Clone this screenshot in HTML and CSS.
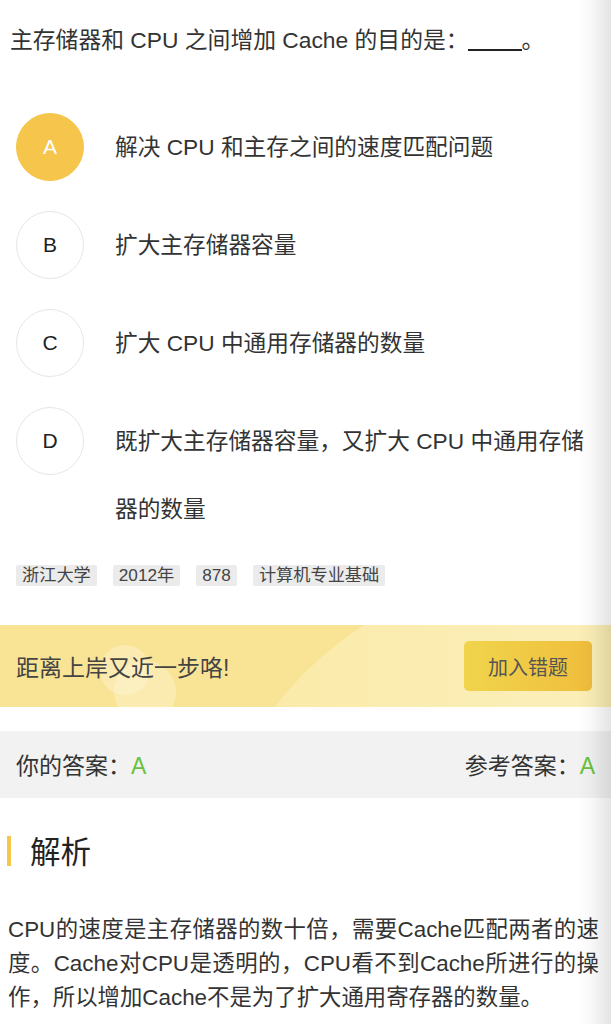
FILE: index.html
```html
<!DOCTYPE html>
<html lang="zh-CN">
<head>
<meta charset="utf-8">
<title>题目解析</title>
<link rel="stylesheet" href="styles.css">
</head>
<body>
<div class="page">
  <div class="question">主存储器和 CPU 之间增加 Cache 的目的是：<span class="blank"></span>。</div>

  <div class="options">
    <div class="option">
      <div class="badge badge-active">A</div>
      <div class="option-text">解决 CPU 和主存之间的速度匹配问题</div>
    </div>
    <div class="option">
      <div class="badge">B</div>
      <div class="option-text">扩大主存储器容量</div>
    </div>
    <div class="option">
      <div class="badge">C</div>
      <div class="option-text">扩大 CPU 中通用存储器的数量</div>
    </div>
    <div class="option">
      <div class="badge">D</div>
      <div class="option-text">既扩大主存储器容量，又扩大 CPU 中通用存储器的数量</div>
    </div>
  </div>

  <div class="tags">
    <span class="tag">浙江大学</span>
    <span class="tag">2012年</span>
    <span class="tag">878</span>
    <span class="tag">计算机专业基础</span>
  </div>

  <div class="banner">
    <div class="bubble bubble-1"></div>
    <div class="bubble bubble-2"></div>
    <div class="arc"></div>
    <div class="banner-text">距离上岸又近一步咯!</div>
    <div class="banner-btn">加入错题</div>
  </div>

  <div class="answers">
    <div class="answer">你的答案：<span class="ok">A</span></div>
    <div class="answer">参考答案：<span class="ok">A</span></div>
  </div>

  <div class="analysis">
    <div class="analysis-title">解析</div>
    <p class="analysis-body">CPU的速度是主存储器的数十倍，需要Cache匹配两者的速度。Cache对CPU是透明的，CPU看不到Cache所进行的操作，所以增加Cache不是为了扩大通用寄存器的数量。</p>
  </div>
</div>
<div class="edge-shade"></div>
</body>
</html>
```

FILE: styles.css
```css
* { box-sizing: border-box; }
html, body { margin: 0; padding: 0; background: #fff; }
body {
  font-family: "Liberation Sans", "Noto Sans CJK SC", sans-serif;
  color: #333;
  overflow: hidden;
}
.page { width: 611px; }

.question {
  padding: 20px 10px 0;
  font-size: 22.8px;
  line-height: 40px;
  height: 80px;
  color: #333;
}
.blank {
  display: inline-block;
  width: 54px;
  height: 28px;
  border-bottom: 2px solid #222;
  vertical-align: -3px;
  margin-left: -1px;
}

.options {
  padding: 33px 16px 0;
  display: flex;
  flex-direction: column;
  gap: 30px;
}
.option {
  display: flex;
  align-items: flex-start;
}
.badge {
  flex: 0 0 68px;
  width: 68px;
  height: 68px;
  border-radius: 50%;
  border: 1px solid #e6e6e6;
  display: flex;
  align-items: center;
  justify-content: center;
  font-size: 21px;
  color: #222;
}
.badge-active {
  background: #f5c64b;
  border-color: #f5c64b;
  color: #fff;
}
.option-text {
  margin-left: 31px;
  font-size: 22.7px;
  line-height: 68px;
  color: #333;
  padding-right: 10px;
}

.tags {
  display: flex;
  gap: 16px;
  padding: 22px 16px 0;
  height: 42px;
}
.tag {
  background: #ebebeb;
  color: #444;
  font-size: 17.2px;
  line-height: 21px;
  height: 21px;
  padding: 0 6px;
  border-radius: 2px;
}

.banner {
  position: relative;
  overflow: hidden;
  margin-top: 40px;
  height: 82px;
  background: #f9e495;
  display: flex;
  align-items: center;
  justify-content: space-between;
  padding: 0 19px 0 16px;
}
.arc {
  position: absolute;
  left: 200px;
  top: -56px;
  width: 712px;
  height: 712px;
  border-radius: 50%;
  background: linear-gradient(to right, #faeaa6, #fbeeb6 45%);
}
.bubble {
  position: absolute;
  border-radius: 50%;
  background: rgba(255, 250, 225, 0.35);
}
.bubble-1 { left: 100px; top: 20px; width: 50px; height: 50px; }
.bubble-2 { left: 114px; top: 36px; width: 62px; height: 62px; }
.banner-text {
  position: relative;
  font-size: 23px;
  color: #444;
}
.banner-btn {
  position: relative;
  width: 128px;
  height: 50px;
  border-radius: 5px;
  background: linear-gradient(to right, #f0d44c, #f0be3d);
  color: #555;
  font-size: 20px;
  display: flex;
  align-items: center;
  justify-content: center;
}

.answers {
  margin-top: 24px;
  height: 67px;
  background: #f2f2f2;
  display: flex;
  align-items: center;
  justify-content: space-between;
  padding: 0 16px 2px;
  font-size: 23px;
  color: #333;
}
.ok { color: #6ac13e; }

.analysis { padding: 38px 12px 0 8px; }
.analysis-title {
  border-left: 4px solid #f5c64b;
  height: 30px;
  line-height: 32px;
  padding-left: 19px;
  margin-left: -1px;
  font-size: 30.5px;
  color: #222;
}
.analysis-body {
  margin: 47px 0 0;
  font-size: 22.4px;
  line-height: 34px;
  color: #333;
  text-align: justify;
}

.edge-shade {
  position: fixed;
  top: 0;
  right: 0;
  bottom: 0;
  width: 34px;
  background: linear-gradient(to right, rgba(0,0,0,0), rgba(0,0,0,0.025) 40%, rgba(0,0,0,0.11));
  pointer-events: none;
}
```
